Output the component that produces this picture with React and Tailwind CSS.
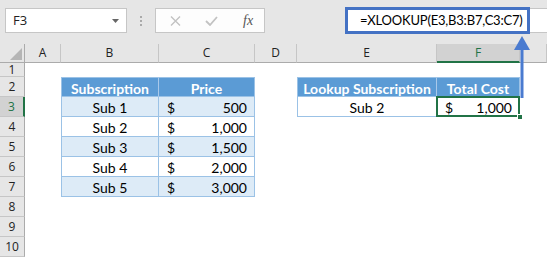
const COLS = ["A", "B", "C", "D", "E", "F", "G"];
const WIDTHS = ["w-[36px]", "w-[98px]", "w-[96px]", "w-[42px]", "w-[140px]", "w-[83px]", "flex-1"];

const prices = [
  ["Sub 1", "500"],
  ["Sub 2", "1,000"],
  ["Sub 3", "1,500"],
  ["Sub 4", "2,000"],
  ["Sub 5", "3,000"],
];

const tb = "border-[#9bc2e6]";

function Money({ value }) {
  return (
    <div className="flex h-full items-center justify-between pl-[8px] pr-[7px] pt-[2px]">
      <span>$</span>
      <span>{value}</span>
    </div>
  );
}

function Toolbar() {
  return (
    <div className="flex h-[44px] items-start bg-[#e6e6e6] pt-[8px] font-['Open_Sans',sans-serif]">
      <div className="ml-[5px] flex h-[25px] w-[122px] items-center justify-between border border-[#c6c6c6] bg-white pl-[7px] pr-[7px] text-[13px] text-[#222]">
        <span>F3</span>
        <svg width="7" height="4" viewBox="0 0 7 4">
          <path d="M0 0 L7 0 L3.5 4 Z" fill="#666" />
        </svg>
      </div>
      <div className="mx-[13px] flex h-[25px] flex-col items-center justify-center gap-[2px]">
        <div className="h-[2px] w-[2px] bg-[#aaa]" />
        <div className="h-[2px] w-[2px] bg-[#aaa]" />
        <div className="h-[2px] w-[2px] bg-[#aaa]" />
      </div>
      <div className="flex h-[25px] w-[110px] items-center border border-[#c6c6c6] bg-[#fdfdfd]">
        <svg className="ml-[14px]" width="11" height="10" viewBox="0 0 11 10">
          <path d="M1 0.5 L10 9.5 M10 0.5 L1 9.5" stroke="#c2c2c2" strokeWidth="1.4" />
        </svg>
        <svg className="ml-[24px]" width="13" height="10" viewBox="0 0 13 10">
          <path d="M1 5 L5 9 L12 1" stroke="#c2c2c2" strokeWidth="1.8" fill="none" />
        </svg>
        <span className="ml-[25px] font-['Liberation_Serif',serif] text-[14px] italic text-[#555]">fx</span>
      </div>
      <div className="w-[80px]" />
      <div className="-mt-[1px] flex h-[27px] w-[185px] items-center overflow-hidden whitespace-nowrap border-[3px] border-[#4472c4] bg-white pl-[12px] font-['Lato',sans-serif] text-[13px] tracking-[-0.2px] text-black">
        =XLOOKUP(E3,B3:B7,C3:C7)
      </div>
      <div className="h-[25px] flex-1 border-y border-[#c6c6c6] bg-white" />
    </div>
  );
}

function HeaderRow() {
  return (
    <div className="flex h-[19px] bg-[#e6e6e6] font-['Open_Sans',sans-serif] text-[12px] text-[#222]">
      <div className="relative w-[25px] border-r border-b border-[#ababab]">
        <svg className="absolute left-[10px] top-[4px]" width="12" height="12" viewBox="0 0 12 12">
          <path d="M12 0 L12 12 L0 12 Z" fill="#b5b5b5" />
        </svg>
      </div>
      {COLS.map((c, i) =>
        c === "F" ? (
          <div key={c} className={`${WIDTHS[i]} flex items-center justify-center border-r border-[#c6c6c6] border-b-2 border-b-[#217346] bg-[#d2d2d2] text-[#217346]`}>
            {c}
          </div>
        ) : (
          <div key={c} className={`${WIDTHS[i]} flex items-center justify-center border-r border-b border-r-[#c6c6c6] border-b-[#ababab]`}>
            {c === "G" ? "" : c}
          </div>
        )
      )}
    </div>
  );
}

function RowHead({ n, h, selected }) {
  return (
    <div
      className={`flex w-[25px] shrink-0 items-center justify-center border-b font-['Open_Sans',sans-serif] text-[12px] ${h} ${
        selected
          ? "border-r-2 border-r-[#217346] border-b-[#c6c6c6] bg-[#d2d2d2] text-[#217346]"
          : "border-r border-r-[#ababab] border-b-[#c6c6c6] bg-[#e6e6e6] text-[#222]"
      }`}
    >
      {n}
    </div>
  );
}

function SheetRow({ n, children, h = "h-[20px]", selected }) {
  return (
    <div className={`flex ${h}`}>
      <RowHead n={n} h={h} selected={selected} />
      {children}
    </div>
  );
}

export default function App() {
  return (
    <div className="relative h-[258px] w-[547px] overflow-hidden bg-white font-['Lato',sans-serif] text-[14px] text-black">
      <Toolbar />
      <HeaderRow />

      <SheetRow n="1" h="h-[14px]" />

      <SheetRow n="2">
        <div className="w-[36px]" />
        <div className={`flex w-[98px] items-center justify-center border-l border-t border-r border-b ${tb} border-r-[#a9c9ea] bg-[#5b9bd5] pt-[2px] font-bold text-white`}>
          Subscription
        </div>
        <div className={`flex w-[96px] items-center justify-center border-t border-r border-b ${tb} bg-[#5b9bd5] pt-[2px] font-bold text-white`}>
          Price
        </div>
        <div className="w-[42px]" />
        <div className={`flex w-[140px] items-center justify-center border-l border-t border-r border-b ${tb} border-r-[#a9c9ea] bg-[#5b9bd5] pt-[2px] font-bold text-white`}>
          Lookup Subscription
        </div>
        <div className={`flex w-[83px] items-center justify-center border-t border-r border-b ${tb} bg-[#5b9bd5] pt-[2px] font-bold text-white`}>
          Total Cost
        </div>
      </SheetRow>

      {prices.map(([name, value], i) => {
        const fill = i % 2 === 0 ? "bg-[#ddebf7]" : "bg-white";
        return (
          <SheetRow key={name} n={String(i + 3)} selected={i === 0}>
            <div className="w-[36px]" />
            <div className={`flex w-[98px] items-center justify-center border-l border-r border-b ${tb} ${fill} pt-[2px]`}>
              {name}
            </div>
            <div className={`w-[96px] border-r border-b ${tb} ${fill}`}>
              <Money value={value} />
            </div>
            {i === 0 && (
              <>
                <div className="w-[42px]" />
                <div className={`flex w-[140px] items-center justify-center border-l border-r border-b ${tb} pt-[2px]`}>
                  Sub 2
                </div>
                <div className={`relative w-[83px] border-b border-r ${tb}`}>
                  <Money value="1,000" />
                  <div className="absolute -left-[1px] -top-[1px] -right-[1px] -bottom-[1px] border-2 border-[#217346]" />
                  <div className="absolute -bottom-[4px] -right-[4px] h-[6px] w-[6px] border border-white bg-[#217346]" />
                </div>
              </>
            )}
          </SheetRow>
        );
      })}

      <SheetRow n="8" />
      <SheetRow n="9" />
      <SheetRow n="10" />

      <svg className="pointer-events-none absolute left-[512px] top-[34px]" width="20" height="66" viewBox="0 0 20 66">
        <path d="M10 14 L10 64" stroke="#4a7bd0" strokeWidth="3" />
        <path d="M2 16 L18 16 L10 2 Z" fill="#4a7bd0" />
      </svg>
    </div>
  );
}
